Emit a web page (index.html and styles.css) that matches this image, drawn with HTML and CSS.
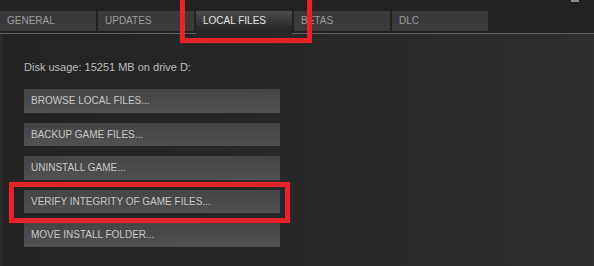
FILE: index.html
```html
<!DOCTYPE html>
<html lang="en">
<head>
    <meta charset="UTF-8">
    <title>Properties - Local Files</title>
    <link rel="stylesheet" href="styles.css">
</head>
<body>
    <div class="window">
        <div class="titlebar">
            <span class="win-btn"></span>
        </div>
        <div class="tabs">
            <div class="tab">GENERAL</div>
            <div class="tab">UPDATES</div>
            <div class="tab active">LOCAL FILES</div>
            <div class="tab">BETAS</div>
            <div class="tab">DLC</div>
        </div>
        <div class="panel">
            <p class="disk">Disk usage: 15251 MB on drive D:</p>
            <div class="actions">
                <button class="action">BROWSE LOCAL FILES...</button>
                <button class="action">BACKUP GAME FILES...</button>
                <button class="action">UNINSTALL GAME...</button>
                <button class="action">VERIFY INTEGRITY OF GAME FILES...</button>
                <button class="action">MOVE INSTALL FOLDER...</button>
            </div>
        </div>

        <!-- red highlight marks -->
        <div class="mark mark-tab"></div>
        <div class="mark mark-verify"></div>
    </div>
</body>
</html>
```

FILE: styles.css
```css
body {
    margin: 0;
    background: #222222;
    font-family: 'Liberation Sans', Arial, sans-serif;
}

.window {
    position: relative;
    width: 594px;
    height: 266px;
    overflow: hidden;
    background: #222222;
    display: flex;
    flex-direction: column;
}

.titlebar {
    height: 11px;
    display: flex;
    justify-content: flex-end;
    align-items: flex-start;
    padding-right: 15px;
}

.win-btn {
    width: 8px;
    height: 2px;
    background: #8a8a8a;
}

.tabs {
    display: flex;
    gap: 2px;
    height: 22px;
    border-bottom: 1px solid #616161;
}

.tab {
    width: 89px;
    height: 20px;
    padding-left: 7px;
    line-height: 20px;
    font-size: 10px;
    color: #9c9c9c;
    background: #3a3a3a;
}

.tab.active {
    position: relative;
    height: 23px;
    color: #e2e2e2;
    background: linear-gradient(#4b4b4b, #2c2c2c 70%, #252525);
    z-index: 1;
}

.panel {
    flex: 1;
    padding: 27px 24px 0 24px;
    border-left: 3px solid #2b2b2b;
    border-right: 3px solid #2f2f2f;
    background: linear-gradient(to right, #232323, #272727 45%, #2e2e2e);
}

.disk {
    margin: 0 0 15px -3px;
    font-size: 11px;
    line-height: 13px;
    color: #bdbdbd;
}

.actions {
    display: flex;
    flex-direction: column;
    gap: 10px;
    margin-left: -3px;
}

.action {
    width: 256px;
    height: 23.5px;
    padding: 0 0 0 7px;
    border: none;
    text-align: left;
    font-family: inherit;
    font-size: 10px;
    line-height: 23px;
    color: #c8c8c8;
    background: linear-gradient(#444444, #4c4c4c 60%, #515151);
}

.mark {
    position: absolute;
    border: 5px solid #e5232b;
    box-shadow: 0 0 1px rgba(229, 35, 43, 0.6);
}

.mark-tab {
    left: 180px;
    top: -8px;
    width: 122px;
    height: 41px;
    z-index: 2;
}

.mark-verify {
    left: 9px;
    top: 182px;
    width: 271px;
    height: 31px;
}
```
